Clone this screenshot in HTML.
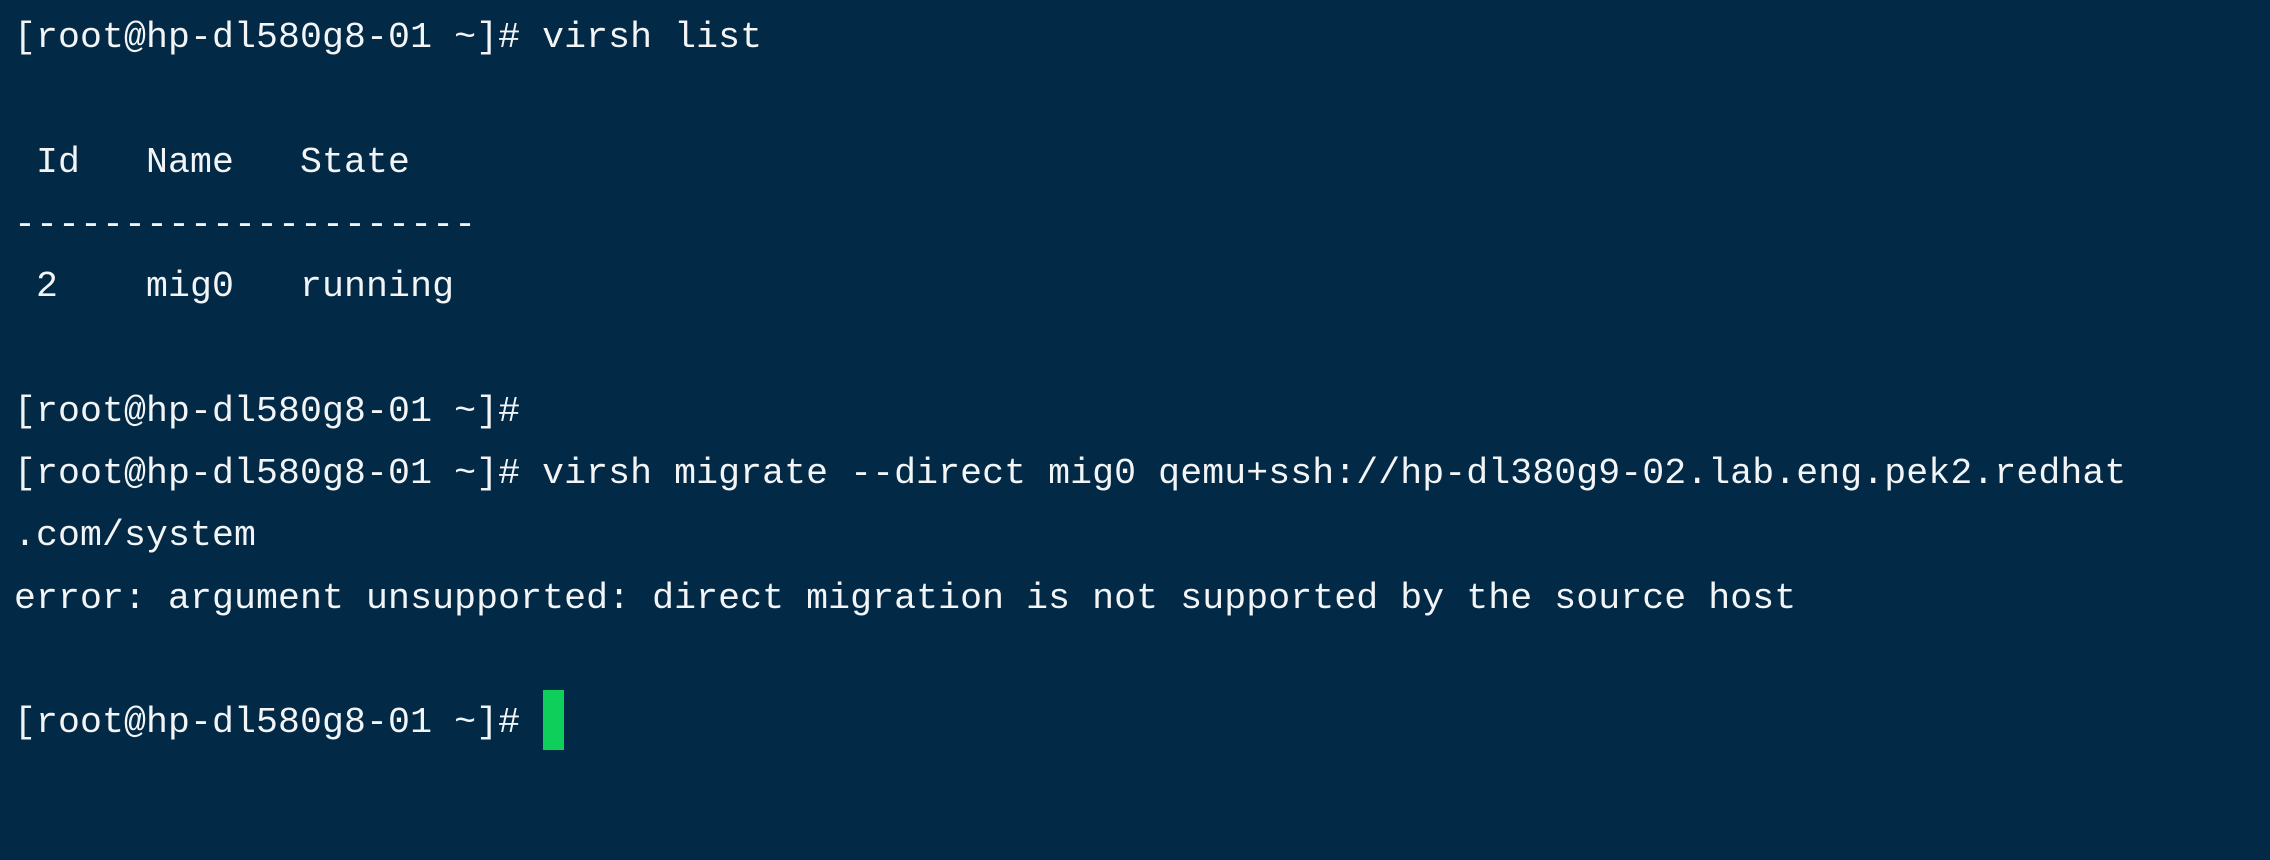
<!DOCTYPE html>
<html><head><meta charset="utf-8"><style>
html,body{margin:0;padding:0;}
body{width:2270px;height:860px;background:#022945;overflow:hidden;position:relative;}
pre{margin:0;position:absolute;left:14px;top:7px;font-family:"Liberation Mono",monospace;font-size:36.5px;line-height:62.3px;color:#f2f4f6;letter-spacing:0.1px;}
.cur{position:absolute;left:543px;top:690px;width:21px;height:60px;background:#0dcf5a;}
</style></head><body>
<pre>[root@hp-dl580g8-01 ~]# virsh list

 Id   Name   State
---------------------
 2    mig0   running

[root@hp-dl580g8-01 ~]#
[root@hp-dl580g8-01 ~]# virsh migrate --direct mig0 qemu+ssh://hp-dl380g9-02.lab.eng.pek2.redhat
.com/system
error: argument unsupported: direct migration is not supported by the source host

[root@hp-dl580g8-01 ~]#</pre>
<div class="cur"></div>
</body></html>
